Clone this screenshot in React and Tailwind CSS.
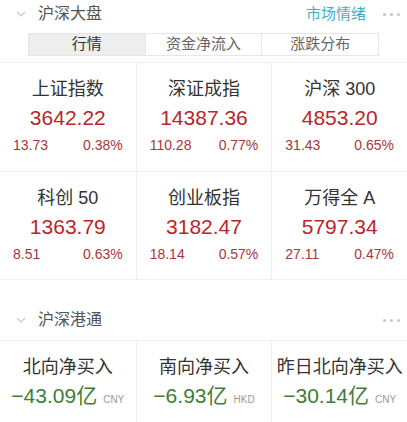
import React from "react";

const FONT = { fontFamily: '"Liberation Sans", "Noto Sans CJK SC", sans-serif' };

function Chevron() {
  return (
    <svg width="10" height="6" viewBox="0 0 10 6" className="shrink-0">
      <path d="M1 1 L5 5 L9 1" fill="none" stroke="#c8c8c8" strokeWidth="1.2" />
    </svg>
  );
}

function Dots() {
  return (
    <div className="flex gap-[4px] items-center">
      <span className="w-[3px] h-[3px] rounded-full bg-[#c4c4c4]" />
      <span className="w-[3px] h-[3px] rounded-full bg-[#c4c4c4]" />
      <span className="w-[3px] h-[3px] rounded-full bg-[#c4c4c4]" />
    </div>
  );
}

const indices = [
  ["上证指数", "3642.22", "13.73", "0.38%"],
  ["深证成指", "14387.36", "110.28", "0.77%"],
  ["沪深 300", "4853.20", "31.43", "0.65%"],
  ["科创 50", "1363.79", "8.51", "0.63%"],
  ["创业板指", "3182.47", "18.14", "0.57%"],
  ["万得全 A", "5797.34", "27.11", "0.47%"],
];

const flows = [
  ["北向净买入", "−43.09", "CNY"],
  ["南向净买入", "−6.93", "HKD"],
  ["昨日北向净买入", "−30.14", "CNY"],
];

export default function App() {
  return (
    <div className="w-[407px] h-[422px] bg-white overflow-hidden" style={FONT}>
      <div className="h-[28px] flex items-center pl-[16px] pr-[7px]">
        <Chevron />
        <span className="ml-[12px] text-[16px] text-[#555]">沪深大盘</span>
        <span className="ml-auto text-[15px] text-[#3fb0bf]">市场情绪</span>
        <div className="ml-[17px]"><Dots /></div>
      </div>
      <div className="mt-[5px] mx-[28px] h-[23px] flex border border-[#e6e6e6] text-[15px]">
        <div className="flex-1 flex items-center justify-center bg-[#eeeeee] text-[#333]">行情</div>
        <div className="flex-1 flex items-center justify-center border-l border-[#e6e6e6] text-[#666]">资金净流入</div>
        <div className="flex-1 flex items-center justify-center border-l border-[#e6e6e6] text-[#666]">涨跌分布</div>
      </div>
      <div className="mt-[6px] grid grid-cols-3 border-t border-b border-[#f0f0f0]">
        {indices.map(([name, val, chg, pct], i) => (
          <div
            key={name}
            className={`flex flex-col items-center ${i % 3 !== 0 ? "border-l border-[#efefef]" : ""} ${i < 3 ? "border-b border-[#efefef] h-[109px]" : "h-[107px]"}`}
          >
            <div className="mt-[15px] text-[18px] leading-[22px] text-[#333] whitespace-pre">{name}</div>
            <div className="mt-[6px] text-[21px] leading-[24px] text-[#b8262c]">{val}</div>
            <div className="mt-[7px] w-full flex justify-between px-[13px] text-[14px] leading-[16px] text-[#a8363a]">
              <span>{chg}</span>
              <span>{pct}</span>
            </div>
          </div>
        ))}
      </div>
      <div className="h-[60px] flex items-end pb-[10px] pl-[16px] pr-[7px]">
        <div className="flex items-center w-full h-[20px]">
          <Chevron />
          <span className="ml-[12px] text-[16px] text-[#555]">沪深港通</span>
          <div className="ml-auto"><Dots /></div>
        </div>
      </div>
      <div className="grid grid-cols-3 border-t border-[#f0f0f0] h-[84px]">
        {flows.map(([name, val, cur], i) => (
          <div
            key={name}
            className={`flex flex-col items-center ${i !== 0 ? "border-l border-[#efefef]" : ""}`}
          >
            <div className="mt-[15px] text-[18px] leading-[22px] text-[#333] whitespace-nowrap">{name}</div>
            <div className="mt-[6px] flex items-baseline text-[#3e7d34]">
              <span className="text-[21px] leading-[24px]">{val}亿</span>
              <span className="ml-[6px] text-[10px] text-[#999]">{cur}</span>
            </div>
          </div>
        ))}
      </div>
    </div>
  );
}
